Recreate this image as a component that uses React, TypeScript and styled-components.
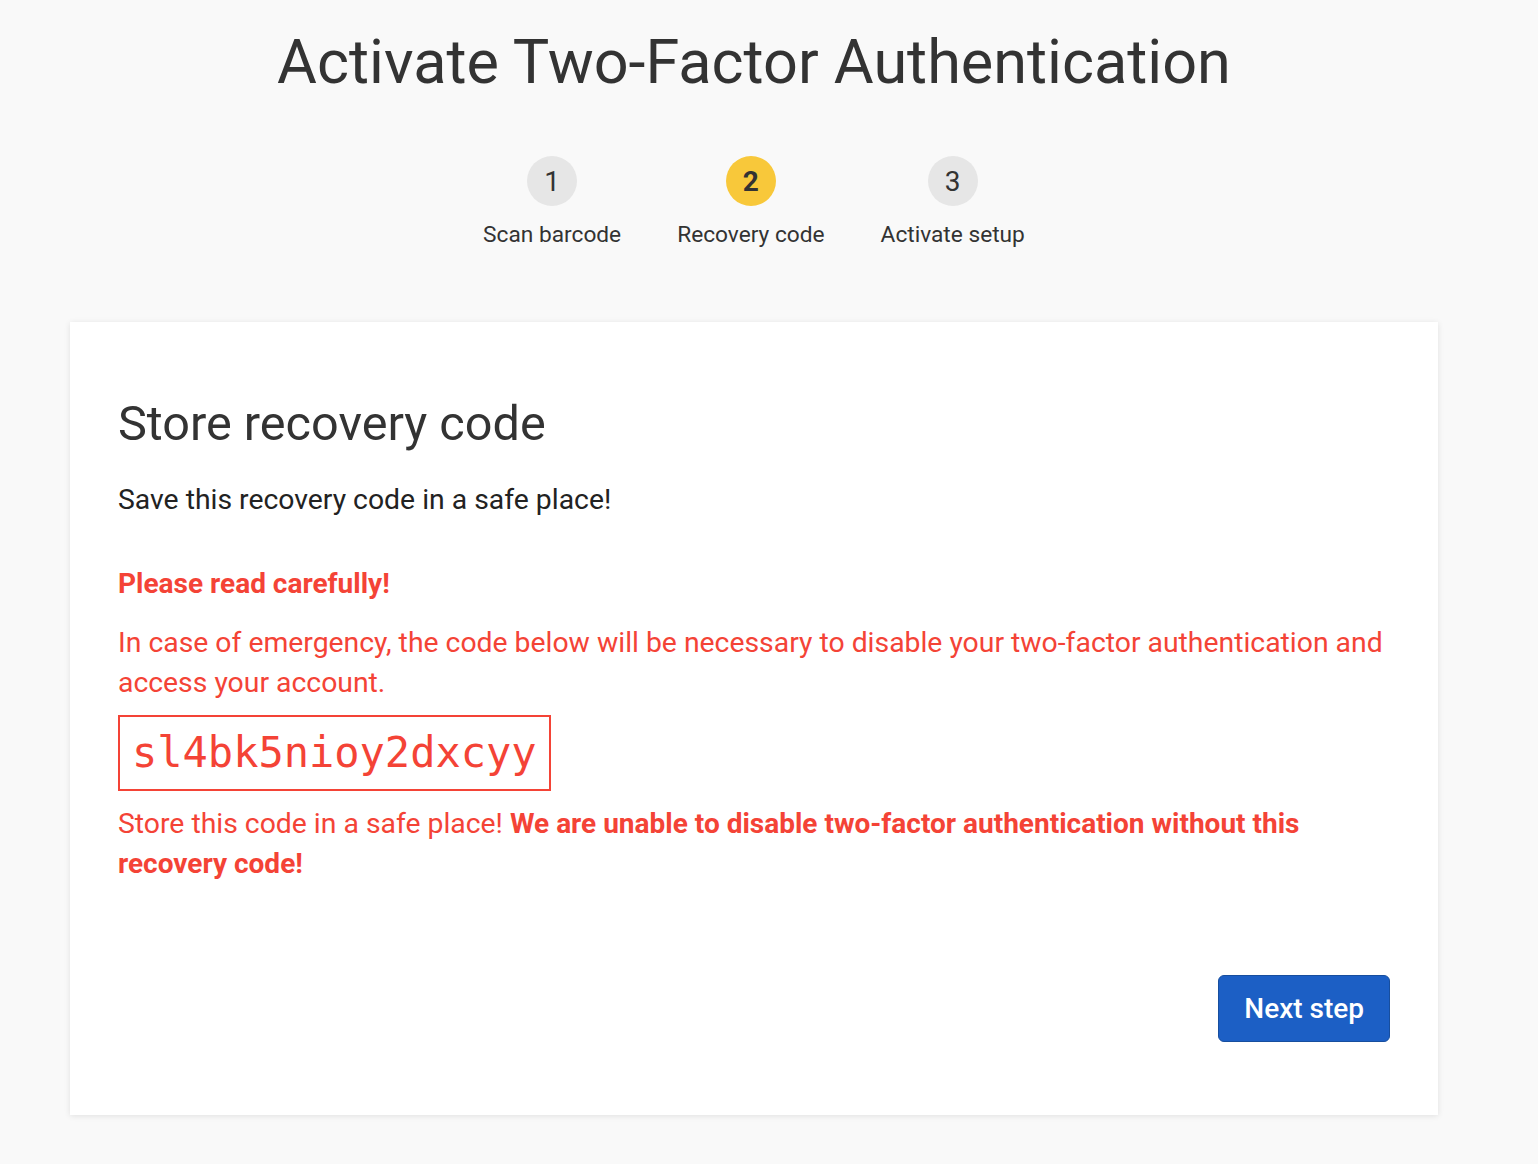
import React from "react";
import styled, { createGlobalStyle } from "styled-components";

const GlobalStyle = createGlobalStyle`
  html, body {
    margin: 0;
    padding: 0;
    background: #f9f9f9;
  }
  body {
    font-family: Roboto, "Liberation Sans", Arial, sans-serif;
    color: #333;
  }
  * { box-sizing: border-box; }
`;

const Page = styled.div`
  width: 100%;
  padding: 26px 100px 50px 70px;
`;

const Title = styled.h1`
  margin: 0;
  text-align: center;
  font-size: 61.2px;
  line-height: 72px;
  font-weight: 400;
  color: #333;
`;

const Steps = styled.ol`
  list-style: none;
  margin: 58px 0 0;
  padding: 0;
  display: flex;
  justify-content: center;
  gap: 56px;
`;

const Step = styled.li`
  display: flex;
  flex-direction: column;
  align-items: center;
  gap: 16px;
`;

const StepCircle = styled.span<{ $active?: boolean }>`
  width: 50px;
  height: 50px;
  border-radius: 50%;
  display: flex;
  align-items: center;
  justify-content: center;
  background: ${(p) => (p.$active ? "#f8c83a" : "#e6e6e6")};
  font-size: 28px;
  font-weight: ${(p) => (p.$active ? 700 : 400)};
  color: #333;
`;

const StepLabel = styled.span`
  font-size: 22.7px;
  line-height: 26px;
  color: #333;
`;

const Card = styled.section`
  margin-top: 74px;
  background: #fff;
  box-shadow: 0 1px 6px rgba(0, 0, 0, 0.1);
  padding: 73px 48px;
  display: flex;
  flex-direction: column;
  align-items: flex-start;
`;

const CardHeading = styled.h2`
  margin: 0;
  font-size: 48.6px;
  line-height: 58px;
  font-weight: 400;
  color: #333;
`;

const Lead = styled.p`
  margin: 27px 0 0;
  font-size: 28.35px;
  line-height: 40px;
  color: #222;
`;

const Warning = styled.p<{ $gap: number }>`
  margin: ${(p) => p.$gap}px 0 0;
  font-size: 28.35px;
  line-height: 40px;
  color: #f44336;
`;

const Strong = styled.strong`
  font-weight: 700;
  font-size: 28px;
`;

const CodeBox = styled.div`
  margin-top: 12px;
  border: 2px solid #f44336;
  padding: 8px 12px;
  font-family: "DejaVu Sans Mono", "Liberation Mono", monospace;
  font-size: 42px;
  line-height: 56px;
  color: #f44336;
`;

const Footer = styled.div`
  align-self: stretch;
  display: flex;
  justify-content: flex-end;
  margin-top: 91px;
`;

const NextButton = styled.button`
  font-family: Roboto, "Liberation Sans", Arial, sans-serif;
  font-size: 28px;
  font-weight: 500;
  line-height: 33px;
  color: #fff;
  background: #1c5fc5;
  border: 1px solid #174e9e;
  border-radius: 6px;
  height: 67px;
  padding: 0 25px;
  cursor: pointer;
`;

const steps = [
  { n: 1, label: "Scan barcode" },
  { n: 2, label: "Recovery code", active: true },
  { n: 3, label: "Activate setup" },
];

export default function App() {
  return (
    <>
      <GlobalStyle />
      <Page>
        <Title>Activate Two-Factor Authentication</Title>
        <Steps>
          {steps.map((s) => (
            <Step key={s.n}>
              <StepCircle $active={s.active}>{s.n}</StepCircle>
              <StepLabel>{s.label}</StepLabel>
            </Step>
          ))}
        </Steps>
        <Card>
          <CardHeading>Store recovery code</CardHeading>
          <Lead>Save this recovery code in a safe place!</Lead>
          <Warning $gap={44}>
            <Strong>Please read carefully!</Strong>
          </Warning>
          <Warning $gap={19}>
            In case of emergency, the code below will be necessary to disable your two-factor
            authentication and access your account.
          </Warning>
          <CodeBox>sl4bk5nioy2dxcyy</CodeBox>
          <Warning $gap={13}>
            Store this code in a safe place!{" "}
            <Strong>
              We are unable to disable two-factor authentication without this recovery code!
            </Strong>
          </Warning>
          <Footer>
            <NextButton type="button">Next step</NextButton>
          </Footer>
        </Card>
      </Page>
    </>
  );
}
